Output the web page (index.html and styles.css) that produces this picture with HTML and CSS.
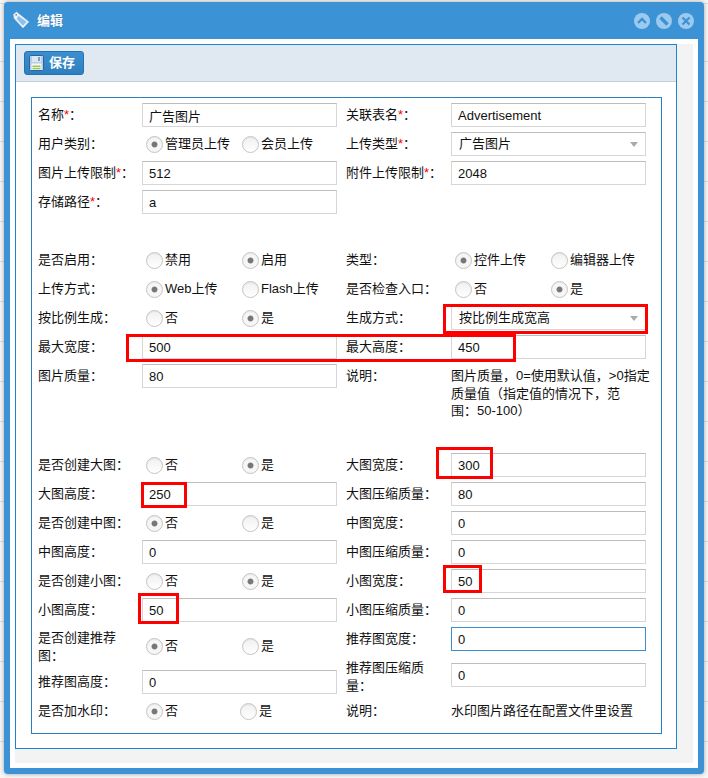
FILE: index.html
```
<!DOCTYPE html>
<html lang="zh-CN">
<head>
<meta charset="utf-8">
<title>编辑</title>
<link rel="stylesheet" href="styles.css">
</head>
<body>
<div class="window">
  <header class="titlebar">
    <svg class="tag" width="18" height="18" viewBox="0 0 18 18"><path d="M1.500 3.500 4.500 1 16.800 10.800 11 17 2.200 7.500z" fill="#f1f4f7" stroke="#d3d9df" stroke-width=".6"/><path d="M6.200 4.800 14.600 10.800 11 14.700 4.700 8z" fill="#86c3f3"/><circle cx="4.200" cy="3.800" r=".9" fill="#6d8297"/></svg>
    <h1 class="title">编辑</h1>
    <div class="tools">
      <span class="tool"><svg width="16" height="16" viewBox="0 0 16 16"><path d="M4 10 8 6l4 4" fill="none" stroke="#3b92d5" stroke-width="2.400"/></svg></span>
      <span class="tool"><svg width="16" height="16" viewBox="0 0 16 16"><path d="M4.500 4.500l7 7" fill="none" stroke="#3b92d5" stroke-width="3.400"/></svg></span>
      <span class="tool"><svg width="16" height="16" viewBox="0 0 16 16"><path d="M4.500 4.500l7 7M11.500 4.500l-7 7" fill="none" stroke="#3b92d5" stroke-width="2.200"/></svg></span>
    </div>
  </header>
  <div class="content">
    <div class="grey">
      <div class="panel">
        <div class="toolbar">
          <button class="save" type="button">
            <svg width="15" height="16" viewBox="0 0 15 16"><rect x=".5" y=".5" width="14" height="15" rx="1" fill="#b9cce6" stroke="#2f639f"/><rect x="3" y="1" width="9" height="6" fill="#dce7f4"/><rect x="9" y="2" width="2" height="4" fill="#7f9fc8"/><rect x="2.500" y="8.500" width="10" height="6.500" fill="#f6f8f1"/><rect x="3.500" y="10.500" width="8" height="1.500" fill="#92cb5e"/><rect x="3.500" y="12.800" width="8" height="1.500" fill="#92cb5e"/></svg>
            <span>保存</span>
          </button>
        </div>
        <div class="form">
          <div class="row"><label class="lab">名称<em>*</em>：</label><input class="inp" value="广告图片"><label class="lab">关联表名<em>*</em>：</label><input class="inp" value="Advertisement"></div>
          <div class="row"><label class="lab">用户类别：</label><div class="radios"><span class="opt on">管理员上传</span><span class="opt">会员上传</span></div><label class="lab">上传类型<em>*</em>：</label><div class="select">广告图片</div></div>
          <div class="row"><label class="lab">图片上传限制<em>*</em>：</label><input class="inp" value="512"><label class="lab">附件上传限制<em>*</em>：</label><input class="inp" value="2048"></div>
          <div class="row"><label class="lab">存储路径<em>*</em>：</label><input class="inp" value="a"></div>
          <div class="row"></div>
          <div class="row"><label class="lab">是否启用：</label><div class="radios"><span class="opt">禁用</span><span class="opt on">启用</span></div><label class="lab">类型：</label><div class="radios"><span class="opt on">控件上传</span><span class="opt">编辑器上传</span></div></div>
          <div class="row"><label class="lab">上传方式：</label><div class="radios"><span class="opt on">Web上传</span><span class="opt">Flash上传</span></div><label class="lab">是否检查入口：</label><div class="radios"><span class="opt">否</span><span class="opt on">是</span></div></div>
          <div class="row"><label class="lab">按比例生成：</label><div class="radios"><span class="opt">否</span><span class="opt on">是</span></div><label class="lab">生成方式：</label><div class="select">按比例生成宽高</div></div>
          <div class="row"><label class="lab">最大宽度：</label><input class="inp" value="500"><label class="lab">最大高度：</label><input class="inp" value="450"></div>
          <div class="row notes"><label class="lab">图片质量：</label><input class="inp" value="80"><label class="lab">说明：</label><div class="note">图片质量，0=使用默认值，&gt;0指定质量值（指定值的情况下，范<br>围：50-100）</div></div>
          <div class="row"><label class="lab">是否创建大图：</label><div class="radios"><span class="opt">否</span><span class="opt on">是</span></div><label class="lab">大图宽度：</label><input class="inp" value="300"></div>
          <div class="row"><label class="lab">大图高度：</label><input class="inp" value="250"><label class="lab">大图压缩质量：</label><input class="inp" value="80"></div>
          <div class="row"><label class="lab">是否创建中图：</label><div class="radios"><span class="opt on">否</span><span class="opt">是</span></div><label class="lab">中图宽度：</label><input class="inp" value="0"></div>
          <div class="row"><label class="lab">中图高度：</label><input class="inp" value="0"><label class="lab">中图压缩质量：</label><input class="inp" value="0"></div>
          <div class="row"><label class="lab">是否创建小图：</label><div class="radios"><span class="opt">否</span><span class="opt on">是</span></div><label class="lab">小图宽度：</label><input class="inp" value="50"></div>
          <div class="row"><label class="lab">小图高度：</label><input class="inp" value="50"><label class="lab">小图压缩质量：</label><input class="inp" value="0"></div>
          <div class="row tall"><label class="lab wrap">是否创建推荐图：</label><div class="radios low"><span class="opt on">否</span><span class="opt">是</span></div><label class="lab">推荐图宽度：</label><input class="inp focus" value="0"></div>
          <div class="row tall"><label class="lab low">推荐图高度：</label><input class="inp low" value="0"><label class="lab wrap up">推荐图压缩质量：</label><input class="inp" value="0"></div>
          <div class="row"><label class="lab">是否加水印：</label><div class="radios close"><span class="opt on">否</span><span class="opt">是</span></div><label class="lab">说明：</label><div class="plain">水印图片路径在配置文件里设置</div></div>
        </div>
      </div>
    </div>
  </div>
</div>
<i class="mark m1"></i><i class="mark m2"></i><i class="mark m3"></i><i class="mark m4"></i><i class="mark m5"></i><i class="mark m6"></i>
</body>
</html>
```
FILE: styles.css
```
* { box-sizing: border-box; }
html, body { margin: 0; height: 778px; overflow: hidden; }
body {
  position: relative;
  padding: 2px 4px 0;
  background: repeating-linear-gradient(180deg, #f6f6f6 0, #f6f6f6 39px, #dedede 39px, #dedede 40px) 0 22px;
  font: 13px/18px "Liberation Sans", "Noto Sans CJK SC", sans-serif;
  color: #111;
}
.window {
  width: 700px;
  height: 772px;
  background: #3b92d5;
  border-radius: 4px;
  box-shadow: 0 0 4px rgba(0, 0, 0, .35);
  padding: 0 6px 6px;
}
.titlebar { height: 37px; display: flex; align-items: center; padding-left: 2px; }
.tag { margin-top: -1px; }
.title { margin: 0 0 0 7px; font-size: 13px; font-weight: bold; color: #fff; flex: 1; text-shadow: 0 0 1px rgba(0,0,0,.3); }
.tools { display: flex; gap: 6px; margin-right: 4px; }
.tool { width: 16px; height: 16px; border-radius: 50%; background: #9ccaee; display: block; }
.tool svg { display: block; }
.content { background: #fff; height: 729px; padding: 5px; }
.grey { background: #f3f3f3; height: 719px; }
.panel { width: 662px; height: 705px; background: #fff; border: 1px solid #1c84cf; }
.toolbar { height: 37px; background: #e0e9f2; border-bottom: 1px solid #c3cfd9; padding: 6px 8px; }
.save {
  display: flex; align-items: center; gap: 5px;
  width: 60px; height: 24px; padding: 0 0 0 4px;
  background: linear-gradient(#3c8fcf, #2e7fbf);
  border: 1px solid #1d75b8; border-radius: 3px;
  font: bold 13px/18px "Liberation Sans", "Noto Sans CJK SC", sans-serif;
  color: #fff;
}
.form { margin: 15px 14px 15px 15px; border: 1px solid #2a7fc2; padding: 5px 0 5px 6px; height: 637px; }
.row { display: grid; grid-template-columns: 104px 204px 105px 200px; height: 24px; margin-bottom: 5px; align-items: center; }
.row.notes { height: 84px; align-items: start; }
.row.tall { height: 31px; align-items: start; }
.lab { white-space: nowrap; }
.row.notes .lab, .row.tall .lab { margin-top: 3px; }
.row.tall .lab.low { margin-top: 10px; }
.row.tall .lab.wrap { white-space: normal; width: 90px; margin-top: 2px; }
.row.tall .lab.wrap.up { margin-top: -4px; }
.lab em { color: #f00; font-style: normal; }
.inp {
  width: 195px; height: 24px; padding: 0 6px;
  border: 1px solid #d6d6d6; border-top-color: #bdbdbd;
  background: #fff; outline: none;
  font: 13px "Liberation Sans", "Noto Sans CJK SC", sans-serif; color: #111;
}
.inp.focus { border-color: #3a8fd0; }
.low { margin-top: 7px; }
.select {
  width: 195px; height: 24px; padding: 0 7px;
  border: 1px solid #d6d6d6; border-top-color: #bdbdbd;
  line-height: 22px; position: relative;
}
.select::after {
  content: ""; position: absolute; right: 7px; top: 9px;
  border: 4px solid transparent; border-top: 5px solid #aaa; border-bottom: 0;
}
.radios { display: flex; padding-left: 4px; height: 24px; align-items: center; }
.opt { width: 96px; display: flex; align-items: center; gap: 2px; white-space: nowrap; }
.close .opt { width: 94px; }
.opt::before {
  content: ""; width: 15px; height: 15px; border-radius: 50%; flex: none;
  border: 1px solid #c4c4c4;
  background: linear-gradient(#f0f0f0, #fff);
  box-shadow: inset 0 1px 1px rgba(0, 0, 0, .06);
}
.opt.on::before { background: radial-gradient(circle, #777 0, #777 2.500px, #f6f6f6 3.400px, #f6f6f6 100%); }
.note { width: 200px; line-height: 17.500px; margin-top: 3px; }
.plain { white-space: nowrap; }
.mark { position: absolute; border: 3px solid #f00; display: block; }
.m1 { left: 443px; top: 304px; width: 205px; height: 30px; }
.m2 { left: 126px; top: 334px; width: 390px; height: 28px; }
.m3 { left: 436px; top: 447px; width: 57px; height: 32px; }
.m4 { left: 141px; top: 482px; width: 46px; height: 26px; }
.m5 { left: 138px; top: 593px; width: 41px; height: 31px; }
.m6 { left: 443px; top: 565px; width: 39px; height: 28px; }
```
